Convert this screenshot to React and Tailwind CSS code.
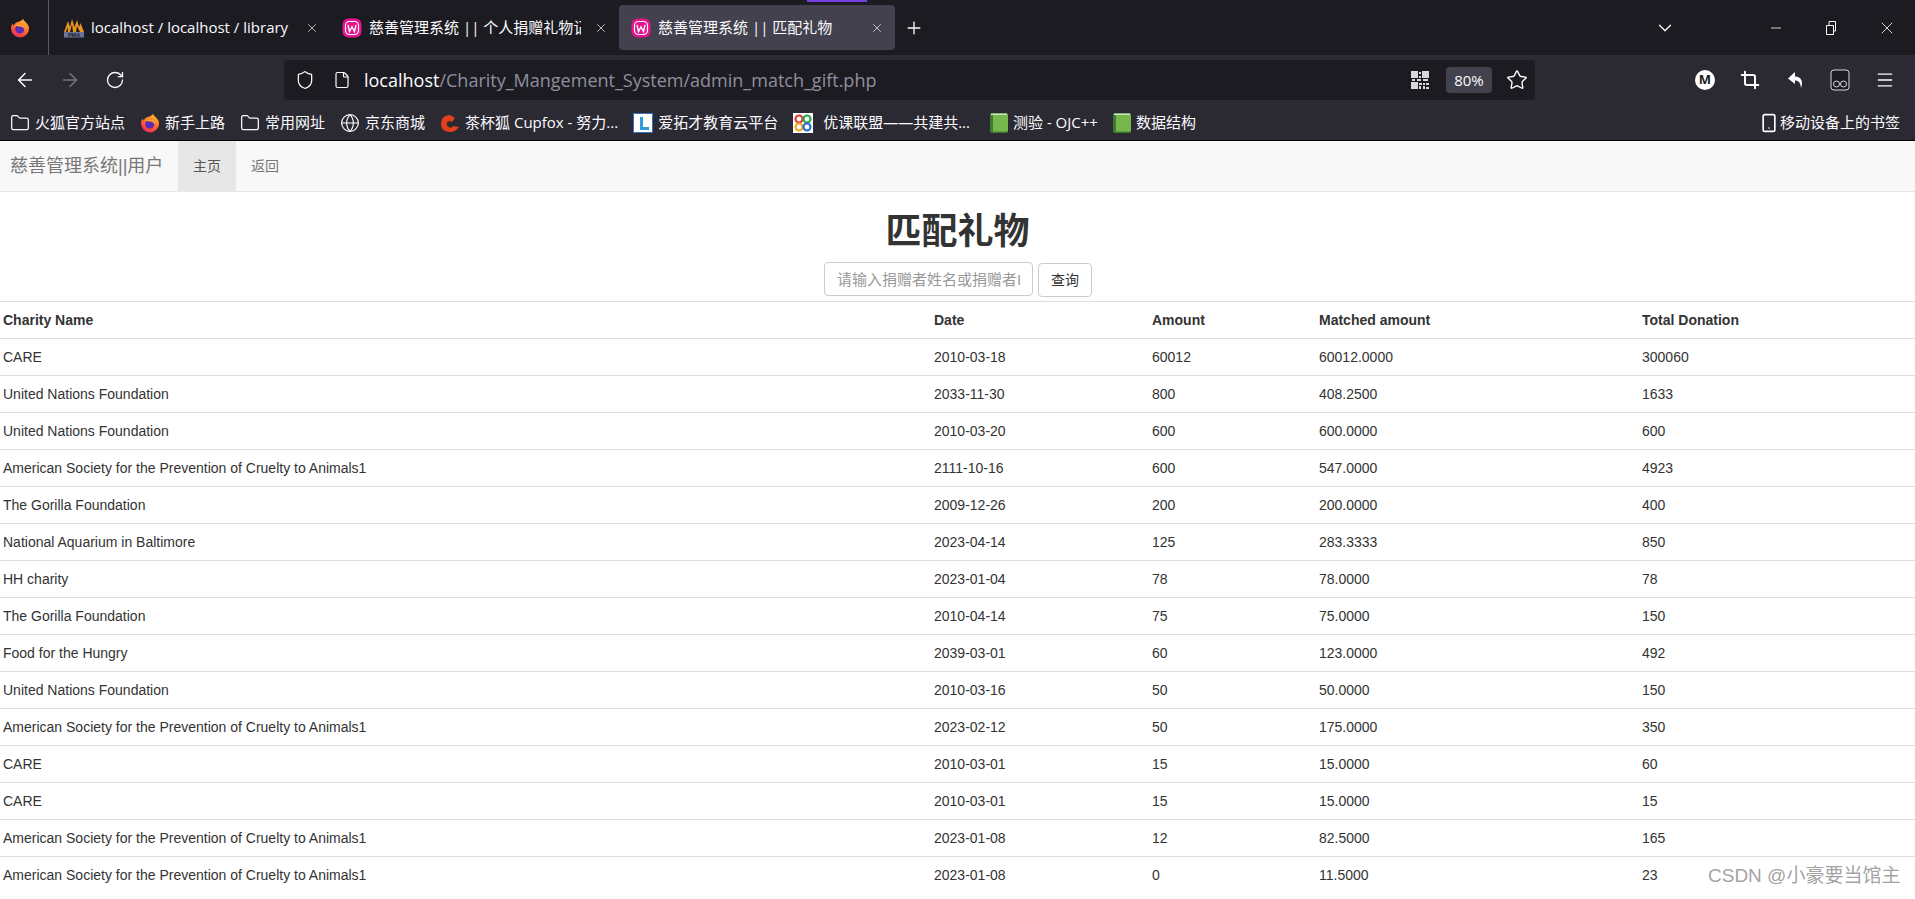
import React from 'react';
import { ArrowLeft, ArrowRight, RotateCw, Shield, File, Star, Folder, Globe, Menu, Crop, ChevronDown, Minus, X, Plus, Smartphone } from 'lucide-react';

const ROWS = [
  ['CARE', '2010-03-18', '60012', '60012.0000', '300060'],
  ['United Nations Foundation', '2033-11-30', '800', '408.2500', '1633'],
  ['United Nations Foundation', '2010-03-20', '600', '600.0000', '600'],
  ['American Society for the Prevention of Cruelty to Animals1', '2111-10-16', '600', '547.0000', '4923'],
  ['The Gorilla Foundation', '2009-12-26', '200', '200.0000', '400'],
  ['National Aquarium in Baltimore', '2023-04-14', '125', '283.3333', '850'],
  ['HH charity', '2023-01-04', '78', '78.0000', '78'],
  ['The Gorilla Foundation', '2010-04-14', '75', '75.0000', '150'],
  ['Food for the Hungry', '2039-03-01', '60', '123.0000', '492'],
  ['United Nations Foundation', '2010-03-16', '50', '50.0000', '150'],
  ['American Society for the Prevention of Cruelty to Animals1', '2023-02-12', '50', '175.0000', '350'],
  ['CARE', '2010-03-01', '15', '15.0000', '60'],
  ['CARE', '2010-03-01', '15', '15.0000', '15'],
  ['American Society for the Prevention of Cruelty to Animals1', '2023-01-08', '12', '82.5000', '165'],
  ['American Society for the Prevention of Cruelty to Animals1', '2023-01-08', '0', '11.5000', '23'],
];

const HEADERS = ['Charity Name', 'Date', 'Amount', 'Matched amount', 'Total Donation'];

const FirefoxIcon = ({ id }) => (
  <svg width="20" height="20" viewBox="0 0 20 20" className="shrink-0">
    <defs>
      <linearGradient id={id} x1="0.7" y1="0" x2="0.2" y2="1">
        <stop offset="0" stopColor="#ffbd2e" />
        <stop offset="0.5" stopColor="#ff6a2b" />
        <stop offset="1" stopColor="#e3255f" />
      </linearGradient>
    </defs>
    <path d="M13 0.5c.4 1.8 1.6 2.6 3 4 1.9 1.9 3 3.6 3 6a9 9 0 1 1-18 0c0-2 .7-3.7 1.6-5 .1 1 .5 1.6 1.1 2 .7-2 2.6-3.4 4.8-3.8C10.800 3.300 12.400 2.300 13 .5z" fill={`url(#${id})`} />
    <circle cx="9.800" cy="11" r="4.600" fill="#5b2bb5" />
    <path d="M5 7.500c2-1.500 6-2 8.500.2 1.300 1.200 1.500 3 1 4.500-.3-2-1.700-3.400-4-3.700-2-.2-4 .2-5.500-1z" fill="#ffa52b" />
  </svg>
);

const PmaIcon = () => (
  <svg width="20" height="20" viewBox="0 0 20 20" className="shrink-0">
    <path d="M0 14 L4 3 L6 9 L8 1 L10.500 9 L13 2 L15 9 L16.500 5 L20 14 L16 14 L13 8 L12 14 L9 14 L8 6 L6 14 L4 14 L3.500 9 L2 14z" fill="#e8951f" />
    <rect x="0" y="14" width="20" height="5.500" fill="#6c7399" />
    <text x="10" y="18.800" textAnchor="middle" fontSize="5.500" fontWeight="700" fill="#1c1b22" fontFamily="Liberation Sans">PMA</text>
  </svg>
);

const WampIcon = () => (
  <svg width="20" height="20" viewBox="0 0 20 20" className="shrink-0">
    <rect x="0.500" y="0.500" width="19" height="19" rx="6" fill="#e5148f" />
    <rect x="3.500" y="3.500" width="13" height="13" rx="4" fill="none" stroke="#fff" strokeWidth="1.200" />
    <path d="M6 7 L7.500 13.500 L10 9 L12.500 13.500 L14 7" fill="none" stroke="#fff" strokeWidth="1.400" />
  </svg>
);

const Tab = ({ icon, title, width, active, gap }) => (
  <div className={`relative flex items-center shrink-0 h-[45px] rounded-[4px] ${active ? 'bg-[#42414d]' : ''} ${width}`}>
    {active && <div className="absolute top-[-5px] left-[188px] w-[60px] h-[2px] bg-[#7542e5]" />}
    <div className="ml-[12px] shrink-0">{icon}</div>
    <div className={`overflow-hidden whitespace-nowrap text-[15px] text-[#fbfbfe] ml-[7px] ${gap}`}>{title}</div>
    <X size={14} strokeWidth={1.4} className="absolute right-[11px] top-[16px] text-[#d8d8dc]" />
  </div>
);

const Book = () => (
  <svg width="18" height="20" viewBox="0 0 18 20" className="shrink-0">
    <rect x="0" y="0" width="18" height="20" rx="2" fill="#3f7a32" />
    <rect x="3" y="1.500" width="15" height="17" fill="#78b64e" />
    <rect x="1" y="0.500" width="16" height="1.500" fill="#cfe3bf" />
  </svg>
);

const Bookmark = ({ icon, text, className }) => (
  <div className={`flex items-center shrink-0 ${className}`}>
    {icon}
    <span className="ml-[5px] whitespace-nowrap text-[15px] text-[#fbfbfe]">{text}</span>
  </div>
);

const BrowserChrome = () => (
  <div className="font-['Open_Sans','Noto_Sans_CJK_SC',sans-serif]">
    <div className="flex items-center h-[55px] bg-[#1c1b22]">
      <div className="flex items-center w-[49px] h-full shrink-0 pl-[10px] border-r border-[#5b5a63]">
        <FirefoxIcon id="ff-a" />
      </div>
      <Tab width="w-[278px] ml-[3px]" gap="w-[205px]" icon={<PmaIcon />} title="localhost / localhost / library" />
      <Tab width="w-[289px]" gap="w-[212px] -ml-0" icon={<WampIcon />} title="慈善管理系统 || 个人捐赠礼物记录" />
      <Tab active width="w-[276px]" gap="w-[220px]" icon={<WampIcon />} title="慈善管理系统 || 匹配礼物" />
      <Plus size={20} strokeWidth={1.6} className="ml-[9px] text-[#fbfbfe]" />
      <ChevronDown size={22} strokeWidth={1.4} className="ml-auto mr-[92px] text-[#fbfbfe]" />
      <Minus size={16} strokeWidth={1.2} className="mr-[40px] text-[#fbfbfe]" />
      <svg width="14" height="14" viewBox="0 0 14 14" fill="none" stroke="#fbfbfe" className="mr-[39px]">
        <path d="M2.500 4.500h7v9h-7z M5 4.500v-4h6.500v9.500h-2" />
      </svg>
      <X size={20} strokeWidth={1} className="mr-[18px] text-[#fbfbfe]" />
    </div>
    <div className="flex items-center h-[50px] bg-[#2b2a33] text-[#fbfbfe]">
      <ArrowLeft size={22} strokeWidth={1.6} className="ml-[14px]" />
      <ArrowRight size={22} strokeWidth={1.6} className="ml-[23px] text-[#75747b]" />
      <RotateCw size={20} strokeWidth={1.6} className="ml-[24px]" />
      <div className="flex items-center ml-[159px] w-[1251px] h-[40px] rounded-[4px] bg-[#1c1b22]">
        <Shield size={20} strokeWidth={1.5} className="ml-[11px]" />
        <File size={18} strokeWidth={1.6} className="ml-[18px]" />
        <div className="ml-[13px] text-[18px] whitespace-nowrap">
          localhost<span className="text-[#8f8f9d]">/Charity_Mangement_System/admin_match_gift.php</span>
        </div>
        <svg width="18" height="18" viewBox="0 0 18 18" className="ml-auto fill-[#d8d8dc]">
          <path d="M0 0h7v7H0z M11 0h7v7h-7z M0 11h7v7H0z M8 1h2v2H8z M8 5h2v2H8z M1 8h3v2H1z M6 8h4v2H6z M12 8h5v2h-5z M8 12h3v2H8z M12 12h2v2h-2z M15 12h3v2h-3z M8 15h2v3H8z M12 15h2v3h-2z M15 16h3v2h-3z" />
        </svg>
        <div className="flex items-center justify-center ml-[17px] w-[46px] h-[26px] rounded-[4px] bg-[#42414d] text-[15px]">80%</div>
        <Star size={22} strokeWidth={1.5} className="ml-[14px] mr-[7px]" />
      </div>
      <div className="flex items-center justify-center ml-[160px] w-[20px] h-[20px] rounded-full bg-white text-[#1c1b22] text-[13px] font-bold">M</div>
      <Crop size={20} strokeWidth={2.4} className="ml-[25px]" />
      <svg width="20" height="20" viewBox="0 0 20 20" className="ml-[26px] fill-[#fbfbfe]">
        <path d="M9 2 L2 8.500 L9 14 V10.500 C12.500 10.500 14.500 12.500 15 18 C17.500 12 15.500 6.500 9 6.500z" />
      </svg>
      <svg width="20" height="22" viewBox="0 0 20 22" fill="none" stroke="#d8d8dc" className="ml-[24px]">
        <rect x="1" y="1" width="18" height="20" rx="3" fill="#1c1b22" />
        <circle cx="6.500" cy="15" r="3" />
        <circle cx="13.500" cy="15" r="3" />
      </svg>
      <Menu size={20} strokeWidth={1.6} className="ml-[25px]" />
    </div>
    <div className="flex items-center h-[35px] pl-[10px] bg-[#2b2a33] border-b border-black box-content">
      <Bookmark icon={<Folder size={20} strokeWidth={1.5} color="#fbfbfe" />} text="火狐官方站点" />
      <Bookmark className="ml-[15px]" icon={<FirefoxIcon id="ff-b" />} text="新手上路" />
      <Bookmark className="ml-[15px]" icon={<Folder size={20} strokeWidth={1.5} color="#fbfbfe" />} text="常用网址" />
      <Bookmark className="ml-[15px]" icon={<Globe size={20} strokeWidth={1.4} color="#fbfbfe" />} text="京东商城" />
      <Bookmark
        className="ml-[15px]"
        icon={
          <svg width="20" height="20" viewBox="0 0 20 20" className="shrink-0">
            <path d="M10 2 C4 2 1 6 1 11 C1 16 5 19 10 19 C14 19 17 17 19 14 L13 13 C12 15 9 15 7.500 13 C6 11 7 8 10 8 L12 9 L15 5z" fill="#e2401d" />
          </svg>
        }
        text="茶杯狐 Cupfox - 努力..."
      />
      <Bookmark
        className="ml-[15px]"
        icon={
          <div className="flex items-end w-[20px] h-[20px] pl-[6px] pb-[2px] bg-white border border-[#3a6fc4]">
            <div className="w-[9px] h-[13px] border-l-[3px] border-b-[3px] border-[#2f9bd8]" />
          </div>
        }
        text="爱拓才教育云平台"
      />
      <Bookmark
        className="ml-[15px] [&>span]:ml-[10px]"
        icon={
          <svg width="20" height="20" viewBox="0 0 20 20" className="shrink-0">
            <rect width="20" height="20" fill="#fff" />
            <circle cx="6" cy="6" r="3.500" fill="none" stroke="#e53935" strokeWidth="2.200" />
            <circle cx="14" cy="6" r="3.500" fill="none" stroke="#29a84a" strokeWidth="2.200" />
            <circle cx="6" cy="14" r="3.500" fill="none" stroke="#f5a623" strokeWidth="2.200" />
            <circle cx="14" cy="14" r="3.500" fill="none" stroke="#2a6fdb" strokeWidth="2.200" />
          </svg>
        }
        text="优课联盟——共建共..."
      />
      <Bookmark className="ml-[20px]" icon={<Book />} text="测验 - OJC++" />
      <Bookmark className="ml-[15px]" icon={<Book />} text="数据结构" />
      <div className="flex items-center ml-auto mr-[15px] text-[15px] text-[#fbfbfe] whitespace-nowrap">
        <Smartphone size={20} strokeWidth={2} />
        <span className="ml-[1px]">移动设备上的书签</span>
      </div>
    </div>
  </div>
);

const Navbar = () => (
  <div className="flex h-[51px] bg-[#f8f8f8] border-b border-[#e7e7e7]">
    <div className="pl-[10px] w-[178px] text-[18px] leading-[50px] text-[#777]">慈善管理系统||用户</div>
    <div className="px-[15px] text-[14px] leading-[50px] text-[#555] bg-[#e7e7e7]">主页</div>
    <div className="px-[15px] text-[14px] leading-[50px] text-[#777]">返回</div>
  </div>
);

const GiftTable = () => (
  <table className="w-full table-fixed border-collapse text-[14px] text-[#333]">
    <colgroup>
      <col className="w-[931px]" />
      <col className="w-[218px]" />
      <col className="w-[167px]" />
      <col className="w-[323px]" />
      <col />
    </colgroup>
    <thead>
      <tr className="border-t border-[#ddd]">
        {HEADERS.map((h) => (
          <th key={h} className="px-[3px] py-2 leading-5 text-left font-bold">{h}</th>
        ))}
      </tr>
    </thead>
    <tbody>
      {ROWS.map((row, i) => (
        <tr key={i} className="border-t border-[#ddd]">
          {row.map((cell, j) => (
            <td key={j} className="px-[3px] py-2 leading-5">{cell}</td>
          ))}
        </tr>
      ))}
    </tbody>
  </table>
);

export default function App() {
  return (
    <div className="relative h-[899px] overflow-hidden bg-white font-['Liberation_Sans','Noto_Sans_CJK_SC',sans-serif]">
      <BrowserChrome />
      <Navbar />
      <h1 className="pt-[20px] pb-[10px] text-center text-[36px] leading-[40px] font-bold text-[#333]">匹配礼物</h1>
      <div className="flex justify-center items-start h-[39px] pl-[1px]">
        <input
          placeholder="请输入捐赠者姓名或捐赠者ID"
          className="w-[209px] h-[34px] px-[12px] rounded-[4px] border border-[#ccc] text-[15px] placeholder:text-[#999]"
        />
        <button className="ml-[5px] mt-[1px] w-[54px] h-[34px] rounded-[4px] border border-[#ccc] bg-white text-[14px] text-[#333]">查询</button>
      </div>
      <GiftTable />
      <div className="absolute left-[1708px] top-[862px] text-[19px] whitespace-nowrap text-[#8a8a8a]/80">CSDN @小豪要当馆主</div>
    </div>
  );
}
